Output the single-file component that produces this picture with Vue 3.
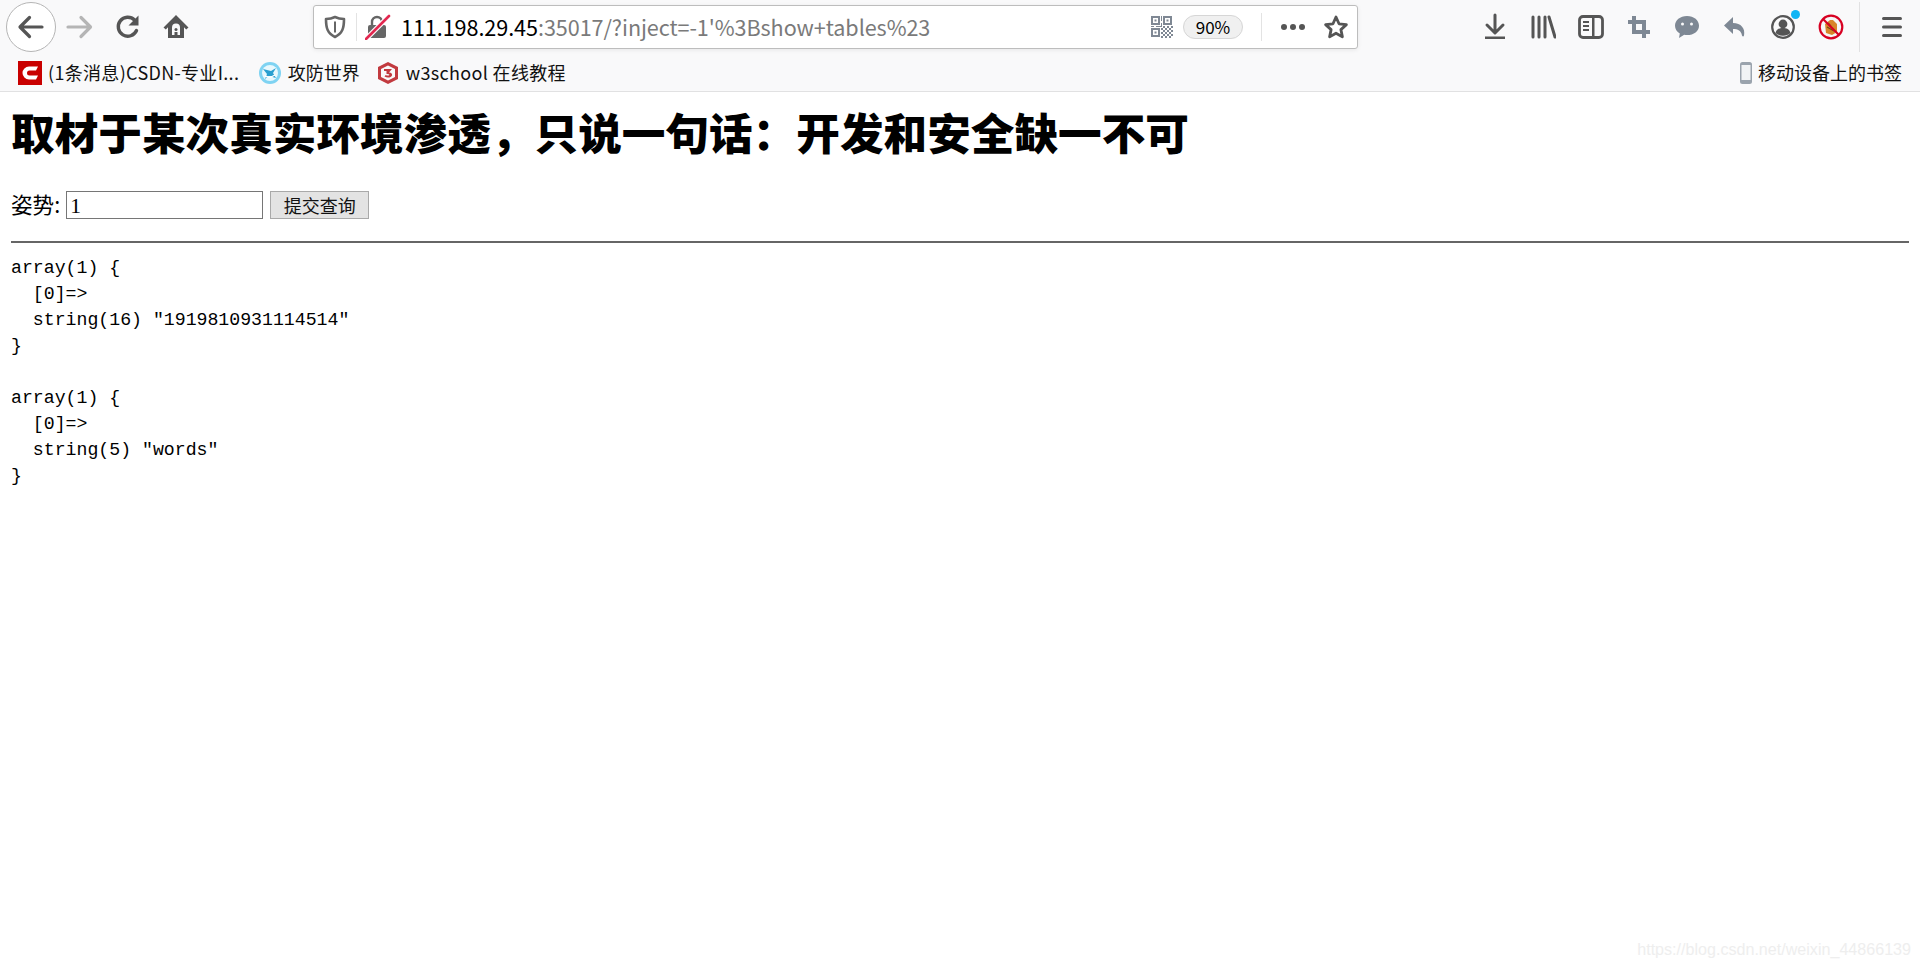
<script setup>
const pre1 = `array(1) {
  [0]=>
  string(16) "1919810931114514"
}

array(1) {
  [0]=>
  string(5) "words"
}
`
</script>

<template>
  <div class="page">
    <header class="chrome">
      <div class="nav">
        <button class="back-btn" aria-label="back">
          <svg width="30" height="30" viewBox="0 0 30 30"><path d="M26 15H4.500M13.500 5.500L4 15l9.500 9.500" fill="none" stroke="#555" stroke-width="3.200" stroke-linecap="round" stroke-linejoin="round"/></svg>
        </button>
        <span class="slot">
          <svg width="30" height="30" viewBox="0 0 30 30"><path d="M3 15h22M16 5.500l9.500 9.500-9.500 9.500" fill="none" stroke="#b5b5b5" stroke-width="3.200" stroke-linecap="round" stroke-linejoin="round"/></svg>
        </span>
        <span class="slot">
          <svg width="28" height="28" viewBox="0 0 28 28"><path d="M22.500 17.500A9.500 9.500 0 1 1 20.500 7" fill="none" stroke="#555" stroke-width="3.400" stroke-linecap="round"/><path d="M24.500 2.500v10h-10z" fill="#555"/></svg>
        </span>
        <span class="slot">
          <svg width="28" height="28" viewBox="0 0 28 28"><path d="M14 2L1.500 14.500l2.300 2L6 14.300V25h16V14.300l2.200 2.200 2.300-2z" fill="#555"/><path d="M10 14.500a4 4 0 0 1 8 0V22h-2.500v-3h-3v3H10z" fill="#f9f9fa"/><circle cx="14" cy="16.500" r="1.500" fill="#555"/></svg>
        </span>

        <div class="urlbar">
          <span class="bar-icon shield">
            <svg width="22" height="24" viewBox="0 0 22 24"><path d="M11 2c3 1.500 5.500 2 9 2 0 9-1.500 14.500-9 18C3.500 18.500 2 13 2 4c3.500 0 6-.5 9-2z" fill="none" stroke="#666" stroke-width="2.600" stroke-linejoin="round"/><path d="M10 6.500h2v11h-2z" fill="#666"/></svg>
          </span>
          <span class="bar-div"></span>
          <span class="bar-icon lock">
            <svg width="26" height="26" viewBox="0 0 26 26"><rect x="3" y="11" width="18" height="13" rx="2" fill="#666"/><path d="M7 11V8a5 5 0 0 1 10 0v3" fill="none" stroke="#666" stroke-width="2.400"/><path d="M2 24L23 3" stroke="#fff" stroke-width="5"/><path d="M1 25L24 2" stroke="#e22850" stroke-width="2.600" stroke-linecap="round"/></svg>
          </span>
          <span class="url"><span class="host">111.198.29.45</span>:35017/?inject=-1'%3Bshow+tables%23</span>
          <span class="bar-icon qr">
            <svg width="22" height="22" viewBox="0 0 22 22" fill="#7f8894">
              <path d="M0 0h9v9H0zM2 2v5h5V2zM3.500 3.500h2v2h-2zM12 0h9v9h-9zM14 2v5h5V2zM15.500 3.500h2v2h-2zM0 12h9v9H0zM2 14v5h5v-5zM3.500 15.500h2v2h-2z" fill-rule="evenodd"/>
              <path d="M10 0h1v5h-1zM10 7h1v4h-1zM0 10h3v1H0zM5 10h5v1H5zM12 10h2v2h-2zM16 10h2v2h-2zM20 10h2v2h-2zM10 12h2v2h-2zM14 12h2v2h-2zM18 12h2v2h-2zM12 14h2v2h-2zM16 14h2v2h-2zM20 14h2v2h-2zM10 16h2v2h-2zM14 16h2v2h-2zM18 16h2v2h-2zM12 18h2v2h-2zM16 18h2v2h-2zM20 18h2v2h-2zM10 20h2v2h-2zM14 20h2v2h-2zM18 20h2v2h-2z"/>
            </svg>
          </span>
          <span class="zoom-pill">90%</span>
          <span class="bar-div right"></span>
          <span class="bar-icon dots">
            <svg width="26" height="8" viewBox="0 0 26 8" fill="#555"><circle cx="4" cy="4" r="3"/><circle cx="13" cy="4" r="3"/><circle cx="22" cy="4" r="3"/></svg>
          </span>
          <span class="bar-icon star">
            <svg width="26" height="26" viewBox="0 0 26 26"><path d="M13 3l3 6.800 7.400.8-5.500 5 1.500 7.300L13 19.200 6.600 22.900l1.500-7.300-5.500-5 7.400-.8z" fill="none" stroke="#555" stroke-width="2.800" stroke-linejoin="round"/></svg>
          </span>
        </div>

        <div class="tools">
          <span class="slot">
            <svg width="24" height="28" viewBox="0 0 24 28"><path d="M12 2v17M4 12l8 8 8-8" fill="none" stroke="#555" stroke-width="3" stroke-linecap="round" stroke-linejoin="round"/><path d="M2 23.500h20V26H2z" fill="#555"/></svg>
          </span>
          <span class="slot">
            <svg width="26" height="26" viewBox="0 0 26 26" fill="none" stroke="#555" stroke-width="3" stroke-linecap="round"><path d="M3 3v20M9 3v20M15 3v20M19 3l6 20"/></svg>
          </span>
          <span class="slot">
            <svg width="26" height="26" viewBox="0 0 26 26"><rect x="1.500" y="2.500" width="23" height="21" rx="3.500" fill="none" stroke="#555" stroke-width="2.800"/><path d="M14 3h2.500v20H14zM5 7h6v2H5zM5 11h6v2H5zM5 15h6v2H5z" fill="#555"/></svg>
          </span>
          <span class="slot">
            <svg width="24" height="24" viewBox="0 0 24 24" fill="none" stroke="#7e8894" stroke-width="4" stroke-linecap="butt"><path d="M7 1v16h16M1 7h16v16"/></svg>
          </span>
          <span class="slot">
            <svg width="26" height="26" viewBox="0 0 26 26"><path d="M13 2C6 2 1 6.300 1 11.700c0 3.300 1.900 6.100 4.800 7.800L5 24l5.200-3.200c.9.200 1.900.300 2.800.300 7 0 12-4.100 12-9.400C25 6.300 20 2 13 2z" fill="#7e8894"/><circle cx="8.500" cy="10" r="1.500" fill="#f9f9fa"/><circle cx="17.500" cy="10" r="1.500" fill="#f9f9fa"/></svg>
          </span>
          <span class="slot">
            <svg width="26" height="26" viewBox="0 0 26 26"><path d="M11 3L2 11.500l9 8.500v-5c5 0 8 1.500 9 6.500.6 1.300 1.600 1.300 2 0 1.600-7-3-12.500-11-12.500z" fill="#7e8894"/></svg>
          </span>
          <span class="slot account">
            <svg width="26" height="26" viewBox="0 0 26 26"><circle cx="13" cy="13" r="10.800" fill="none" stroke="#555" stroke-width="2.200"/><circle cx="13" cy="10" r="4.400" fill="#555"/><path d="M5.500 19c1-3.800 4-5 7.500-5s6.500 1.200 7.500 5c-4 3.600-11 3.600-15 0z" fill="#555"/></svg>
            <i class="badge"></i>
          </span>
          <span class="slot">
            <svg width="26" height="26" viewBox="0 0 26 26"><circle cx="13" cy="13" r="10" fill="#f6f6f6"/><path d="M7 10l5-4h3l4 4v8l-5 3-6-2z" fill="#d8852a"/><path d="M9 13l7 4M10 9l3 3" stroke="#7b4a12" stroke-width="1.300"/><circle cx="13" cy="13" r="11.300" fill="none" stroke="#d70022" stroke-width="2.200"/><path d="M5 5l16 16" stroke="#d70022" stroke-width="2.200"/></svg>
          </span>
          <span class="tool-div"></span>
          <span class="slot">
            <svg width="24" height="22" viewBox="0 0 24 22" fill="#555"><rect x="2" y="1" width="20" height="3" rx="1.500"/><rect x="2" y="9.500" width="20" height="3" rx="1.500"/><rect x="2" y="18" width="20" height="3" rx="1.500"/></svg>
          </span>
        </div>
      </div>

      <div class="bookmarks">
        <span class="mark latin first">
          <svg class="fav" width="24" height="24" viewBox="0 0 24 24"><rect width="24" height="24" fill="#c90000"/><path d="M20 5.500h-9a6.500 6.500 0 0 0 0 13h7l2-4h-8.500a2.500 2.500 0 0 1 0-5H18z" fill="#fff"/></svg>
          <span>(1条消息)CSDN-专业I...</span>
        </span>
        <span class="mark">
          <svg class="fav" width="24" height="24" viewBox="0 0 24 24"><circle cx="12" cy="12" r="11" fill="#7fd3f2"/><circle cx="12" cy="12" r="8" fill="#e8f8fd"/><path d="M5 8l8 2 5-3-3 5 3 5-7-2-4 3 2-5z" fill="#2a9fd0"/><path d="M7 15c4 2 7 1 10-1" stroke="#fff" stroke-width="1.500" fill="none"/></svg>
          <span>攻防世界</span>
        </span>
        <span class="mark latin">
          <svg class="fav" width="24" height="24" viewBox="0 0 24 24"><path d="M12 1l10 5v12l-10 5-10-5V6z" fill="#c23a3f"/><path d="M12 4.500L5 8v8l7 3.500 7-3.500V8z" fill="#f9f9fa"/><path d="M8 8h8l-3 3.500c2.500 0 3.500 1.500 3 3-.6 2-4.500 3-7.500 1l1.200-1.600c1.700 1 3.300.8 3.600 0 .2-.7-.6-1-2.800-1v-1.700L10.500 10H8z" fill="#c23a3f"/></svg>
          <span>w3school 在线教程</span>
        </span>
        <span class="mark mobile">
          <svg width="14" height="24" viewBox="0 0 14 24"><rect x="1" y="1" width="12" height="22" rx="2.500" fill="#9aa3ad"/><rect x="2.500" y="4" width="9" height="15" fill="#f1f3f5"/></svg>
          <span>移动设备上的书签</span>
        </span>
      </div>
    </header>

    <main class="content">
      <h1>取材于某次真实环境渗透，只说一句话：开发和安全缺一不可</h1>
      <form class="query" @submit.prevent>
        <label for="inject">姿势:</label>
        <input id="inject" type="text" value="1" />
        <input class="submit" type="submit" value="提交查询" />
      </form>
      <hr />
      <pre>{{ pre1 }}</pre>
    </main>

    <div class="watermark">https://blog.csdn.net/weixin_44866139</div>
  </div>
</template>

<style>
html, body { margin: 0; background: #fff; }
</style>

<style scoped>
.page {
  position: relative;
  height: 968px;
  overflow: hidden;
  background: #fff;
  color: #000;
  font-family: "Liberation Serif", "Noto Sans CJK SC", serif;
}
.chrome {
  height: 92px;
  box-sizing: border-box;
  background: #f9f9fa;
  border-bottom: 1px solid #e1e1e2;
  font-family: "Noto Sans CJK SC", "Noto Sans", sans-serif;
}
.nav {
  height: 54px;
  display: flex;
  align-items: center;
  padding-left: 6px;
}
.back-btn {
  width: 50px;
  height: 50px;
  padding: 0;
  box-sizing: border-box;
  display: flex;
  align-items: center;
  justify-content: center;
  background: #fff;
  border: 1px solid #b5b5b5;
  border-radius: 50%;
}
.slot {
  position: relative;
  flex: none;
  width: 48px;
  height: 48px;
  display: flex;
  align-items: center;
  justify-content: center;
}
.urlbar {
  margin-left: 113px;
  width: 1045px;
  height: 44px;
  box-sizing: border-box;
  flex: none;
  display: flex;
  align-items: center;
  background: #fff;
  border: 1px solid #bdbdbd;
  border-radius: 3px;
  box-shadow: 0 1px 4px rgba(0, 0, 0, 0.08);
}
.bar-icon { display: flex; flex: none; }
.shield { margin-left: 10px; }
.bar-div {
  flex: none;
  width: 1px;
  height: 28px;
  margin-left: 10px;
  background: #e3e3e3;
}
.lock { margin-left: 8px; }
.url {
  flex: 1;
  margin-left: 10px;
  font-size: 21.600px;
  line-height: 30px;
  letter-spacing: -0.07px;
  color: #7a7a7a;
  white-space: nowrap;
}
.host { color: #000; }
.qr { margin-right: 10px; }
.zoom-pill {
  flex: none;
  width: 60px;
  height: 24px;
  box-sizing: border-box;
  border: 1px solid #d6d6d6;
  border-radius: 12px;
  background: #f0f0f0;
  font-size: 17px;
  line-height: 22px;
  text-align: center;
}
.bar-div.right { margin-left: 18px; }
.dots { margin-left: 18px; }
.star { margin-left: 17px; margin-right: 8px; }
.tools {
  margin-left: 113px;
  display: flex;
  align-items: center;
}
.tool-div {
  flex: none;
  width: 1px;
  height: 50px;
  margin: 0 8px 0 4px;
  background: #e1e1e2;
}
.badge {
  position: absolute;
  top: 7px;
  right: 7px;
  width: 9px;
  height: 9px;
  border-radius: 50%;
  background: #0fb5f5;
}
.bookmarks {
  height: 37px;
  box-sizing: border-box;
  padding: 0 18px;
  display: flex;
  align-items: center;
  gap: 16px;
  font-size: 18px;
  line-height: 26px;
  color: #111;
}
.mark { display: flex; align-items: center; gap: 6px; white-space: nowrap; }
.mark > span { position: relative; top: -1px; }
.latin > span { letter-spacing: 0.32px; }
.first { margin-right: 2.500px; }
.fav { flex: none; }
.mobile { margin-left: auto; margin-right: 0; gap: 5px; }
.content { padding: 0 11px; }
h1 {
  margin: 0;
  padding-top: 10.500px;
  font-size: 43.630px;
  line-height: 57px;
  font-weight: 900;
  font-family: "Noto Sans CJK SC", sans-serif;
  white-space: nowrap;
}
.query {
  margin-top: 31.500px;
  height: 28px;
  display: flex;
  align-items: center;
  font-size: 21.600px;
}
.query label { margin: 0 6px 3px 0; font-family: "Noto Sans CJK SC", sans-serif; font-weight: 400; }
.query input {
  box-sizing: border-box;
  height: 28px;
  width: 197px;
  padding: 2px 3px 0;
  border: 1px solid #767676;
  border-radius: 0;
  font: 21.600px "Liberation Serif", serif;
  color: #000;
  background: #fff;
}
.query .submit {
  width: 99px;
  margin-left: 7px;
  padding: 0 0 3px;
  border: 1px solid #a9a9a9;
  background: #e3e3e3;
  font: 400 18px "Noto Sans CJK SC", sans-serif;
  color: #111;
}
hr {
  margin: 22px 0 0;
  height: 0;
  border: 0;
  border-top: 2px solid #666;
}
pre {
  margin: 12px 0 0;
  font-family: "Liberation Mono", "Noto Sans CJK SC", monospace;
  font-size: 18.200px;
  line-height: 26px;
}
.watermark {
  position: absolute;
  right: 9px;
  bottom: 9px;
  font-family: "Liberation Sans", sans-serif;
  font-size: 16.100px;
  line-height: 20px;
  color: #eeeeee;
}
</style>
